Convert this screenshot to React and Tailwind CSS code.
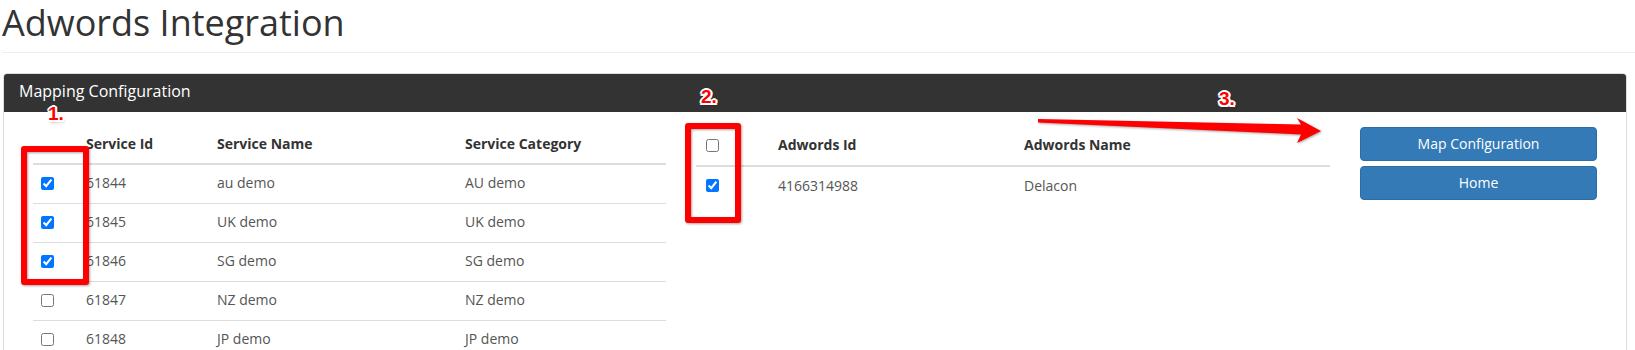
import React from 'react'

const services = [
  { id: '61844', name: 'au demo', category: 'AU demo', checked: true },
  { id: '61845', name: 'UK demo', category: 'UK demo', checked: true },
  { id: '61846', name: 'SG demo', category: 'SG demo', checked: true },
  { id: '61847', name: 'NZ demo', category: 'NZ demo', checked: false },
  { id: '61848', name: 'JP demo', category: 'JP demo', checked: false },
]

function Check({ checked }) {
  return (
    <input type="checkbox" defaultChecked={checked} className="m-0 block w-[13px] h-[13px]" />
  )
}

function Label({ children, className }) {
  return (
    <div
      className={`absolute font-['Liberation_Sans',Arial,sans-serif] font-bold text-[19px] leading-none text-[#f00] [text-shadow:-2px_0_0_#fff,2px_0_0_#fff,0_-2px_0_#fff,0_2px_0_#fff,-1.5px_-1.5px_0_#fff,1.5px_-1.5px_0_#fff,-1.5px_1.5px_0_#fff,1.5px_1.5px_0_#fff,1px_2px_3px_rgba(0,0,0,0.45)] ${className}`}
    >
      {children}
    </div>
  )
}

function ServiceTable() {
  return (
    <div>
      <div className="flex h-[40px] items-center border-b-2 border-[#ddd] font-bold text-[#333]">
        <div className="w-[45px]" />
        <div className="w-[131px] px-2">Service Id</div>
        <div className="w-[248px] px-2">Service Name</div>
        <div className="flex-1 px-2">Service Category</div>
      </div>
      {services.map((s, i) => (
        <div
          key={s.id}
          className={`flex items-center pb-[2px] text-[#555] ${i === 0 ? 'h-[38px]' : 'h-[39px] border-t border-[#ddd]'}`}
        >
          <div className="w-[45px] pl-[8px]">
            <Check checked={s.checked} />
          </div>
          <div className="w-[131px] px-2">{s.id}</div>
          <div className="w-[248px] px-2">{s.name}</div>
          <div className="flex-1 px-2">{s.category}</div>
        </div>
      ))}
    </div>
  )
}

function AdwordsTable() {
  return (
    <div>
      <div className="flex h-[42px] items-center border-b-2 border-[#ddd] font-bold text-[#333]">
        <div className="w-[74px] pl-[10px]">
          <Check checked={false} />
        </div>
        <div className="w-[246px] px-2">Adwords Id</div>
        <div className="flex-1 px-2">Adwords Name</div>
      </div>
      <div className="flex h-[39px] items-center pb-[2px] text-[#555]">
        <div className="w-[74px] pl-[10px]">
          <Check checked={true} />
        </div>
        <div className="w-[246px] px-2">4166314988</div>
        <div className="flex-1 px-2">Delacon</div>
      </div>
    </div>
  )
}

export default function App() {
  return (
    <div className="relative w-[1635px] h-[350px] overflow-hidden bg-white font-['Open_Sans',sans-serif] text-[14px] leading-[20px] text-[#333]">
      <h1 className="ml-[2px] pt-[1px] pb-[7px] border-b border-[#eee] text-[36px] leading-[44px] font-normal text-[#333]">
        Adwords Integration
      </h1>

      <div className="mt-[20px] ml-[3px] w-[1624px] rounded-t-[4px] border border-[#ddd] overflow-hidden">
        <div className="h-[38px] bg-[#333] px-[15px] text-[16px] leading-[34px] text-white">
          Mapping Configuration
        </div>
        <div className="grid grid-cols-[633px_634px_1fr] gap-x-[30px] px-[29px] pt-[13px] pb-[20px]">
          <ServiceTable />
          <AdwordsTable />
          <div className="mt-[2px] flex flex-col gap-[5px]">
            <button className="h-[34px] rounded-[4px] border border-[#2e6da4] bg-[#337ab7] text-white">
              Map Configuration
            </button>
            <button className="h-[34px] rounded-[4px] border border-[#2e6da4] bg-[#337ab7] text-white">
              Home
            </button>
          </div>
        </div>
      </div>

      {/* annotations */}
      <div className="absolute left-[21px] top-[146px] w-[68px] h-[139px] rounded-[3px] border-[6px] border-[#f00] drop-shadow-[1px_1px_1px_rgba(0,0,0,0.35)]" />
      <div className="absolute left-[685px] top-[123px] w-[56px] h-[100px] rounded-[3px] border-[6px] border-[#f00] drop-shadow-[1px_1px_1px_rgba(0,0,0,0.35)]" />
      <Label className="left-[48px] top-[104px]">1.</Label>
      <Label className="left-[701px] top-[87px]">2.</Label>
      <Label className="left-[1219px] top-[89px]">3.</Label>
      <svg
        className="absolute left-[1030px] top-[110px] drop-shadow-[1px_1px_1px_rgba(0,0,0,0.35)]"
        width="300"
        height="40"
        viewBox="1030 110 300 40"
      >
        <polygon
          points="1038,119 1301,124.5 1297,118 1321,131 1297,143 1301,134.5 1038,122.5"
          fill="#f00"
        />
      </svg>
    </div>
  )
}
